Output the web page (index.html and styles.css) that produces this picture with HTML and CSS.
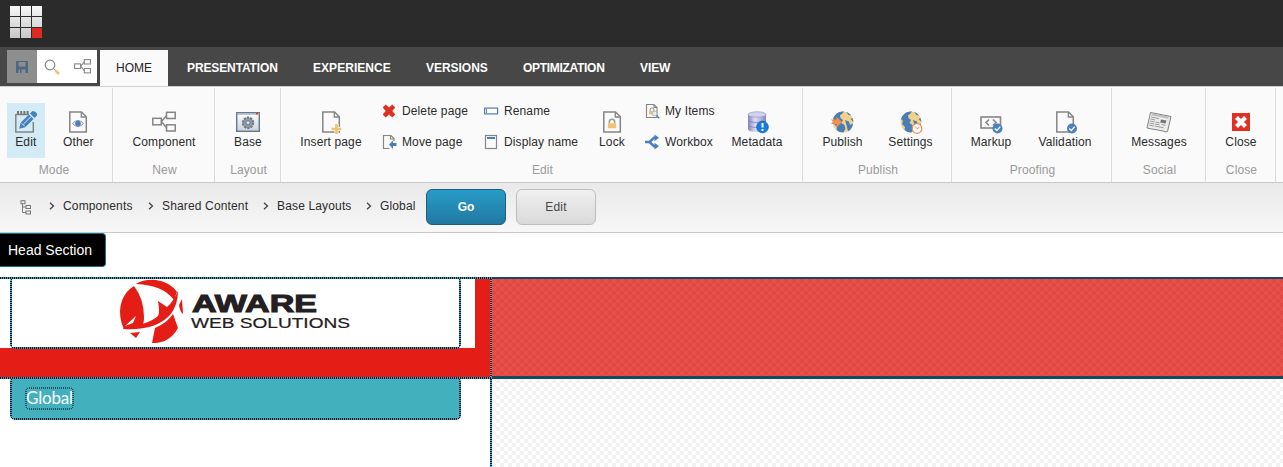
FILE: index.html
```html
<!DOCTYPE html>
<html lang="en">
<head>
<meta charset="utf-8">
<title>Experience Editor</title>
<link rel="stylesheet" href="styles.css">
</head>
<body>
<svg width="0" height="0" class="defs" aria-hidden="true">
  <defs>
    <linearGradient id="cell" x1="0" y1="0" x2="0" y2="33" gradientUnits="userSpaceOnUse"><stop offset="0" stop-color="#f8f8f8"/><stop offset="1" stop-color="#c6c6c6"/></linearGradient>
    <linearGradient id="db"><stop offset="0" stop-color="#8280b8"/><stop offset=".4" stop-color="#dedef6"/><stop offset="1" stop-color="#8886bd"/></linearGradient>
    <linearGradient id="win" x1="0" y1="0" x2="0" y2="1"><stop offset="0" stop-color="#fff"/><stop offset="1" stop-color="#c8d2dc"/></linearGradient>
    <symbol id="page" viewBox="0 0 24 24"><path d="M3.8 2H15.5L20.3 6.8V22H3.8Z" fill="#fafafa" stroke="#858585" stroke-width="1.5"/><path d="M15.3 2V7H20.3" fill="none" stroke="#858585" stroke-width="1.3"/></symbol>
    <symbol id="nodes" viewBox="0 0 24 24"><g fill="none" stroke="#858585" stroke-width="1.5"><rect x=".8" y="8.3" width="8.5" height="6.5"/><rect x="14.5" y="2.3" width="8.7" height="6.2"/><rect x="14.5" y="14.8" width="8.7" height="6.2"/><path d="M9.3 11.5 14.5 5.8M9.3 11.5 14.5 17.7"/></g></symbol>
    <symbol id="globe" viewBox="0 0 24 24"><circle cx="12" cy="12" r="10.5" fill="#f2d28b"/><path d="M6 3.2Q9 .9 13 1.5L11 4 9 5.2 9.5 8 12 10 10.5 13 13.5 15 14.5 18.5 12.5 22.5Q8 22.5 5.5 20L6 17 3 14 4 11 2 9Q3 5.5 6 3.2Z" fill="#487db5"/><path d="M15 1.8 17.5 5 20.2 5.5Q17.5 2.2 15 1.8ZM14 10 18 11.5 19 15 22 13.5Q21.5 19 17 21.5L16 17ZM21.5 8 19.5 9 22.5 12Z" fill="#487db5"/></symbol>
    <symbol id="tick" viewBox="0 0 12 12"><circle cx="6" cy="6" r="5.5" fill="#4a80bd"/><path d="m3 6 2.3 2.3L9 4" fill="none" stroke="#fff" stroke-width="1.5"/></symbol>
    <symbol id="lockshape" viewBox="0 0 10 10"><path d="M2.6 5V3.4Q2.6 1.2 5 1.2T7.4 3.4V5" fill="none" stroke="#9a9a8d" stroke-width="1.3"/><rect x="1.2" y="4.8" width="7.6" height="4.5" fill="#efc372"/></symbol>
  </defs>
</svg>

<header class="topbar">
  <svg class="logo" width="33" height="33" viewBox="0 0 33 33"><path fill="url(#cell)" d="M0 0h10v10H0zM11 0h10v10H11zM22 0h10v10H22zM0 11h10v10H0zM11 11h10v10H11zM22 11h10v10H22zM0 22h10v10H0zM11 22h10v10H11z"/><path d="M22 22h10v10H22z" fill="#df2b1f"/></svg>
</header>

<nav class="tabs">
  <div class="quick">
    <span class="quick-item quick-save"><svg width="14" height="14" viewBox="0 0 14 14"><path d="M1 1H13V13H1ZM3.500 2V6.500H10.500V2ZM3.500 13H5V9.500H3.500ZM6.500 13H10.500V9.500H6.500Z" fill="#4b6885" fill-rule="evenodd"/></svg></span>
    <span class="quick-item"><svg width="16" height="16" viewBox="0 0 16 16"><circle cx="6" cy="6" r="4.8" fill="none" stroke="#858585" stroke-width="1.2"/><path d="m9.5 9.5 1.8 1.8" stroke="#858585"/><path d="m11 11 4 4" stroke="#efc577" stroke-width="2.6"/></svg></span>
    <span class="quick-item"><svg width="17" height="17"><use href="#nodes"/></svg></span>
  </div>
  <span class="tab tab-active">HOME</span>
  <span class="tab t-presentation">PRESENTATION</span>
  <span class="tab t-experience">EXPERIENCE</span>
  <span class="tab t-versions">VERSIONS</span>
  <span class="tab t-optimization">OPTIMIZATION</span>
  <span class="tab t-view">VIEW</span>
</nav>

<section class="ribbon">
  <div class="group g-mode">
    <div class="tools">
      <div class="tool w38 selected"><svg class="icon" viewBox="0 0 24 24"><path d="M1.8 4V22H19.3V12M1.8 4.5H15" fill="none" stroke="#858585" stroke-width="1.5"/><path d="M3 1h2v4H3zM6.2 1h2v4h-2zM9.4 1h2v4h-2zM12.6 1h2v4h-2z" fill="#777"/><path d="m5.2 18.7 1.4-6L15 4.4l4.6 4.6-8.4 8.3ZM16 3.4 18.4 1Q23.5 1.5 23 5.6L20.6 8Z" fill="#487fbd"/><path d="m7.6 13.2 3.1 3.1M9.5 14 17 6.6" stroke="#d2ebf5"/></svg><span>Edit</span></div>
      <div class="tool w68"><svg class="icon" viewBox="0 0 24 24"><use href="#page"/><path d="M6.5 13.5Q12 7.5 17.5 13.5Q12 19.5 6.5 13.5Z" fill="#fff" stroke="#8b9299"/><circle cx="12" cy="13.5" r="2.8" fill="#487fbd"/></svg><span>Other</span></div>
    </div><div class="caption">Mode</div>
  </div>
  <div class="group g-new">
    <div class="tools"><div class="tool"><svg class="icon" viewBox="0 0 24 24"><use href="#nodes"/></svg><span>Component</span></div></div><div class="caption">New</div>
  </div>
  <div class="group g-layout">
    <div class="tools"><div class="tool"><svg class="icon" viewBox="0 0 24 24"><rect x=".7" y="2.7" width="22.6" height="18.6" fill="url(#win)" stroke="#65798b" stroke-width="1.4"/><path d="M1 4h22" stroke="#a8b8c6" stroke-width="1.5"/><path d="M20 3.5h2" stroke="#e53b2b" stroke-width="1.8"/><circle cx="12" cy="12.8" r="5.2" fill="#929ca4" stroke="#697985" stroke-width="2" stroke-dasharray="2.2 1.05"/><circle cx="12" cy="12.8" r="2.1" fill="#dce2e6" stroke="#687783"/></svg><span>Base</span></div></div><div class="caption">Layout</div>
  </div>
  <div class="group g-edit">
    <div class="tools">
      <div class="tool w100"><svg class="icon" viewBox="0 0 24 24"><use href="#page"/><path d="M17.5 14v10M12.5 19h10" stroke="#fafafa" stroke-width="4"/><path d="M17.5 14v10M12.5 19h10" stroke="#edc475" stroke-width="2.7"/></svg><span>Insert page</span></div>
      <div class="pair p1">
        <div class="row"><svg viewBox="0 0 16 16"><path d="m4.7 1.5 3.3 3 3.3-3 3 3L11.3 8l3 3.4-3 3-3.3-3-3.3 3-3-3L4.700 8l-3-3.500Z" fill="#df3022"/></svg><span>Delete page</span></div>
        <div class="row"><svg viewBox="0 0 16 16"><path d="M8.5 14.5H2.500V1.500H10L13 4.500V7M9.500 1.500V5H13" fill="none" stroke="#858585" stroke-width="1.2"/><path d="m8 10.500 4-4v2.500h3.500v3H12V15Z" fill="#487fbd"/></svg><span>Move page</span></div>
      </div>
      <div class="pair p2">
        <div class="row"><svg viewBox="0 0 16 16"><rect x="1.600" y="5.100" width="13" height="5.800" fill="#fff" stroke="#487fbd" stroke-width="1.200"/><path d="M3.500 6v4" stroke="#858585"/></svg><span>Rename</span></div>
        <div class="row"><svg viewBox="0 0 16 16"><rect x="2.500" y="1.500" width="11" height="13" fill="#fafafa" stroke="#858585" stroke-width="1.200"/><path d="M4 4h8" stroke="#487fbd" stroke-width="2"/></svg><span>Display name</span></div>
      </div>
      <div class="tool w46"><svg class="icon" viewBox="0 0 24 24"><use href="#page"/><use href="#lockshape" x="6.500" y="8" width="11" height="11"/></svg><span>Lock</span></div>
      <div class="pair p3">
        <div class="row"><svg viewBox="0 0 16 16"><path d="M2.500 1.500H10L13 4.500V14.500H2.500ZM10 1.500V4.500H13" fill="none" stroke="#858585" stroke-width="1.100"/><use href="#lockshape" x="4" y="4" width="8" height="8"/><circle cx="10.500" cy="10.500" r="2.500" fill="#e9f2f8" fill-opacity=".7" stroke="#9dbad0"/><path d="m12.500 12.500 2.700 2.700" stroke="#487fbd" stroke-width="1.400"/></svg><span>My Items</span></div>
        <div class="row"><svg viewBox="0 0 16 16"><path d="M1 8H5.500L10 3.800H12M5.500 8 10 12.200H12" fill="none" stroke="#487fbd" stroke-width="2.500"/><path d="m10.500.500 4.500 3.300-4.500 3.400ZM10.500 8.800 15 12.200l-4.500 3.300Z" fill="#487fbd"/></svg><span>Workbox</span></div>
      </div>
      <div class="tool w76"><svg class="icon" viewBox="0 0 24 24"><path d="M3 4V19Q3 22 12 22T21 19V4Z" fill="url(#db)"/><ellipse cx="12" cy="4.500" rx="9" ry="2.700" fill="#d3d2ee" stroke="#9997c4" stroke-width=".7"/><path d="M3 10Q5 12.500 12 12.500T21 10M3 15Q5 17.500 12 17.500" fill="none" stroke="#8684b5" stroke-width=".8"/><circle cx="17.500" cy="17" r="5.800" fill="#147fe0" stroke="#075bb5" stroke-width=".8"/><path d="M17.500 13v4.500M17.500 19v2" stroke="#fff" stroke-width="2"/></svg><span>Metadata</span></div>
    </div><div class="caption">Edit</div>
  </div>
  <div class="group g-publish">
    <div class="tools">
      <div class="tool w66"><svg class="icon" viewBox="0 0 24 24"><use href="#globe"/><path d="M0 9.500h5.500V6.500L11 12l-5.500 5.500V14H0l2-2.200Z" fill="#f0914e"/></svg><span>Publish</span></div>
      <div class="tool w70"><svg class="icon" viewBox="0 0 24 24"><use href="#globe"/><circle cx="18" cy="18.500" r="4.800" fill="#fff" stroke="#ee9257" stroke-width="1.300"/><path d="M16 16.500 18 18.700l2.500-1.400" stroke="#ee9257" fill="none"/></svg><span>Settings</span></div>
    </div><div class="caption">Publish</div>
  </div>
  <div class="group g-proofing">
    <div class="tools">
      <div class="tool w66"><svg class="icon" viewBox="0 0 24 24"><rect x="2" y="7" width="19.500" height="11" fill="none" stroke="#858585" stroke-width="1.600"/><path d="m10 9.500-3 3 3 3M14 9.500l3 3-3 3" fill="none" stroke="#858585" stroke-width="1.600"/><use href="#tick" x="13" y="13" width="11" height="11"/></svg><span>Markup</span></div>
      <div class="tool w82"><svg class="icon" viewBox="0 0 24 24"><use href="#page"/><use href="#tick" x="13.500" y="13" width="11" height="11"/></svg><span>Validation</span></div>
    </div><div class="caption">Proofing</div>
  </div>
  <div class="group g-social">
    <div class="tools"><div class="tool"><svg class="icon" viewBox="0 0 24 24"><path d="M3.500 2.500 24 6.500 20.500 21.500Q18 22.500 16 21L0 18Z" fill="#ececec" stroke="#828282"/><path d="M4.500 4.300 21.500 7.800" stroke="#bcbcbc" stroke-width="2"/><path d="m4 7 8 1.700M3.500 9l4.500 1M3 11l4.500 1M2.600 13l4.500 1M2.200 15l4.500 1M8.500 12l4 .8M8 14l4.500.9M7.700 16l9 1.800M14.500 14.500l4 .8" stroke="#949494" stroke-width=".9"/><path d="m14 9.500 5.500 1-1 3-5.300-1Z" fill="#777"/></svg><span>Messages</span></div></div><div class="caption">Social</div>
  </div>
  <div class="group g-close">
    <div class="tools"><div class="tool"><svg class="icon" viewBox="0 0 24 24"><path d="M3 3h18v18H3Z" fill="#df3022"/><path d="m7.500 7.500 9 9M16.500 7.500l-9 9" stroke="#fff" stroke-width="4.200"/></svg><span>Close</span></div></div><div class="caption">Close</div>
  </div>
</section>

<section class="breadcrumb">
  <svg class="tree" width="12" height="15" viewBox="0 0 12 15"><g fill="none" stroke="#777"><rect x="1" y=".7" width="4" height="3"/><rect x="6" y="5.500" width="4.500" height="3"/><rect x="6" y="11" width="4.500" height="3"/><path d="M2.500 4v8.500H6M2.500 7H6"/></g></svg>
  <span class="crumb c1"><svg class="chev" viewBox="0 0 6 8"><path d="m1 .800 3.500 3.200L1 7.200"/></svg>Components</span>
  <span class="crumb c2"><svg class="chev" viewBox="0 0 6 8"><path d="m1 .800 3.500 3.200L1 7.200"/></svg>Shared Content</span>
  <span class="crumb c3"><svg class="chev" viewBox="0 0 6 8"><path d="m1 .800 3.500 3.200L1 7.200"/></svg>Base Layouts</span>
  <span class="crumb c4"><svg class="chev" viewBox="0 0 6 8"><path d="m1 .800 3.500 3.200L1 7.200"/></svg>Global</span>
  <span class="button go">Go</span>
  <span class="button edit">Edit</span>
</section>

<main class="canvas">
  <div class="chip-row"><span class="chip">Head Section</span></div>
  <div class="head">
    <div class="head-left">
      <div class="brand outlined">
        <svg width="451" height="68" viewBox="0 0 451 68">
          <g fill="#e51d17"><path d="M124 7Q134 20 134 38 134 45 132 46 123 50 114 50 110 42 110 32 111 15 124 7Z"/><path d="M126 5Q134 0 146 1 160 3 167 13L164 21Q153 6 126 5Z"/><path d="M148 22 157 28Q163 23 168 12 168 26 160 36 145 52 113 50L114 48Q138 46 148 37Q150 33 148 22Z"/><path d="M169 26 172 20 173 35Q170 33 169 26Z"/><path d="M120 54 130 53 126 59Z"/><path d="M145 49Q157 44 163 35L168 49Q159 65 142 64Z"/></g><path d="m115 47 11-10-3 7Z" fill="#fff"/>
          <text class="wordmark" x="182" y="33" textLength="125" lengthAdjust="spacingAndGlyphs">AWARE</text>
          <text class="subword" x="181" y="48.500" textLength="159" lengthAdjust="spacingAndGlyphs">WEB SOLUTIONS</text>
        </svg>
      </div>
    </div>
    <div class="head-right"></div>
  </div>
  <div class="body">
    <div class="body-left">
      <div class="teal outlined"><span class="global outlined">Global</span></div>
    </div>
    <div class="body-right"></div>
  </div>
</main>
</body>
</html>
```

FILE: styles.css
```css
* { box-sizing: border-box; }
:root {
  --dash-x: repeating-linear-gradient(90deg, #101820 0 1px, #3d9fc4 1px 2px);
  --dash-y: repeating-linear-gradient(#101820 0 1px, #3d9fc4 1px 2px);
}
body { margin: 0; width: 1283px; height: 467px; overflow: hidden; background: #fff; font: 12px/16px "Liberation Sans", Arial, sans-serif; color: #2b2b2b; white-space: nowrap; }
.defs { position: absolute; }
.topbar { height: 47px; background: #2b2b2b; padding: 6px 0 0 10px; }
.logo { display: block; }
.tabs { height: 39px; background: #474747; display: flex; align-items: flex-start; padding: 3px 0 0 7px; }
.quick { display: flex; width: 90px; height: 33px; background: #fff; margin-right: 3px; }
.quick-item { width: 30px; display: flex; align-items: center; justify-content: center; }
.quick-save { background: #8e8e8e; }
.tab { height: 36px; line-height: 36px; font-weight: bold; color: #fff; }
.tab-active { width: 68px; text-align: center; background: #fafafa; color: #222; font-weight: normal; }
.t-presentation { margin-left: 19px; width: 126px; letter-spacing: -.12px; }
.t-experience { width: 113px; letter-spacing: .04px; }
.t-versions { width: 97px; letter-spacing: -.03px; }
.t-optimization { width: 117px; letter-spacing: -.3px; }
.t-view { letter-spacing: -.1px; }

.ribbon { height: 97px; background: #fafafa; border-top: 1px solid #d0d0d0; border-bottom: 1px solid #c9c9c9; padding-top: 1px; display: flex; letter-spacing: .12px; }
.group { height: 94px; border-right: 1px solid #dcdcdc; }
.g-mode { width: 113px; }
.g-new { width: 102px; }
.g-layout { width: 66px; }
.g-edit { width: 522px; }
.g-publish { width: 149px; }
.g-proofing { width: 160px; }
.g-social { width: 94px; }
.g-close { width: 70px; }
.tools { height: 74px; padding: 15px 0 0 1px; display: flex; justify-content: center; }
.g-mode .tools { justify-content: flex-start; padding-left: 7px; }
.g-edit .tools { justify-content: flex-start; padding-left: 0; }
.caption { height: 16px; text-align: center; color: #999; padding-left: 2px; }
.g-mode .caption { padding: 0 4px 0 0; }
.tool { height: 55px; padding-top: 7px; display: flex; flex-direction: column; align-items: center; }
.icon { width: 24px; height: 24px; overflow: visible; }
.selected { background: #d2ebf5; }
.w38 { width: 38px; }
.w46 { width: 46px; }
.w66 { width: 66px; }
.w68 { width: 68px; }
.w70 { width: 70px; }
.w76 { width: 76px; }
.w82 { width: 82px; }
.w100 { width: 100px; }
.pair { display: grid; grid-template-rows: 31px 31px; }
.row { height: 16px; display: flex; align-items: center; gap: 5px; }
.row svg { width: 16px; height: 16px; }
.p1 { width: 102px; }
.p2 { width: 106px; }
.p3 { margin-left: 9px; width: 75px; }

.breadcrumb { height: 50px; display: flex; background: linear-gradient(#e9e9e9, #f7f7f7); border-bottom: 1px solid #c9c9c9; padding: 6px 0 0 20px; letter-spacing: .15px; }
.tree { margin: 11px 17px 0 0; }
.crumb { line-height: 34px; display: flex; align-items: center; height: 34px; }
.chev { width: 6px; height: 8px; margin-right: 8px; fill: none; stroke: #444; stroke-width: 1.3; }
.c1 { width: 99px; }
.c2 { width: 115px; }
.c3 { width: 103px; }
.c4 { width: 60px; }
.button { width: 80px; height: 36px; border-radius: 6px; text-align: center; line-height: 34px; border: 1px solid #bdbdbd; }
.go { color: #fff; font-weight: bold; background: linear-gradient(#289bc8, #2179a1); border-color: #1a5f7c; letter-spacing: 0; }
.edit { margin-left: 10px; background: linear-gradient(#f0f0f0, #d9d9d9); color: #474747; }

.chip-row { height: 44px; display: flex; align-items: flex-start; }
.chip { height: 34px; width: 106px; padding-left: 8px; background: #000; color: #fff; font-size: 14px; line-height: 33px; border: 1px solid #137289; border-left: 0; border-radius: 0 4px 4px 0; }
.head { height: 102px; display: flex; }
.head-left {
  width: 492px;
  padding-left: 10px;
  background:
    var(--dash-x) 0 0 / 100% 2px no-repeat,
    var(--dash-x) 0 100% / 100% 2px no-repeat,
    repeating-linear-gradient(#3b1d22 0 1px, #8b8f98 1px 2px) 100% 0 / 2px 100% no-repeat,
    linear-gradient(#fff, #fff) 0 0 / 475px 71px no-repeat,
    #e51d17;
}
.outlined {
  border-radius: 5px;
  background:
    var(--dash-x) 0 0 / 100% 2px no-repeat,
    var(--dash-x) 0 100% / 100% 2px no-repeat,
    var(--dash-y) 0 0 / 2px 100% no-repeat,
    var(--dash-y) 100% 0 / 2px 100% no-repeat,
    var(--fill, transparent);
}
.brand { --fill: #fff; width: 451px; height: 72px; padding-top: 2px; }
.brand svg { display: block; }
.wordmark { font: bold 23.5px "Liberation Sans", Arial, sans-serif; fill: #242021; stroke: #242021; stroke-width: 1px; }
.subword { font: 14px "Liberation Sans", Arial, sans-serif; fill: #242021; stroke: #242021; stroke-width: .2px; }
.head-right { width: 791px; border-top: 2px solid #174a62; border-bottom: 3px solid #174a62; background: conic-gradient(#df4a42 25%, #e7504a 0 50%, #df4a42 0 75%, #e7504a 0) 0 0 / 8px 8px; }
.body { height: 88px; display: flex; }
.body-left { width: 492px; background: var(--dash-y) 100% 0 / 2px 100% no-repeat; padding-left: 10px; }
.teal { --fill: #43b0be; width: 451px; height: 43px; margin-top: -2px; padding: 10px 0 0 15px; }
.global { --dash-x: repeating-linear-gradient(90deg, #17505f 0 1px, #43b0be 1px 2px); --dash-y: repeating-linear-gradient(#17505f 0 1px, #43b0be 1px 2px); display: block; width: 49px; height: 23px; color: #fff; font: 17px/21px Lato, sans-serif; text-indent: 1px; letter-spacing: -.2px; }
.body-right { width: 791px; background: conic-gradient(#f2f2f2 25%, #fff 0 50%, #f2f2f2 0 75%, #fff 0) 0 0 / 8px 8px; }
```
